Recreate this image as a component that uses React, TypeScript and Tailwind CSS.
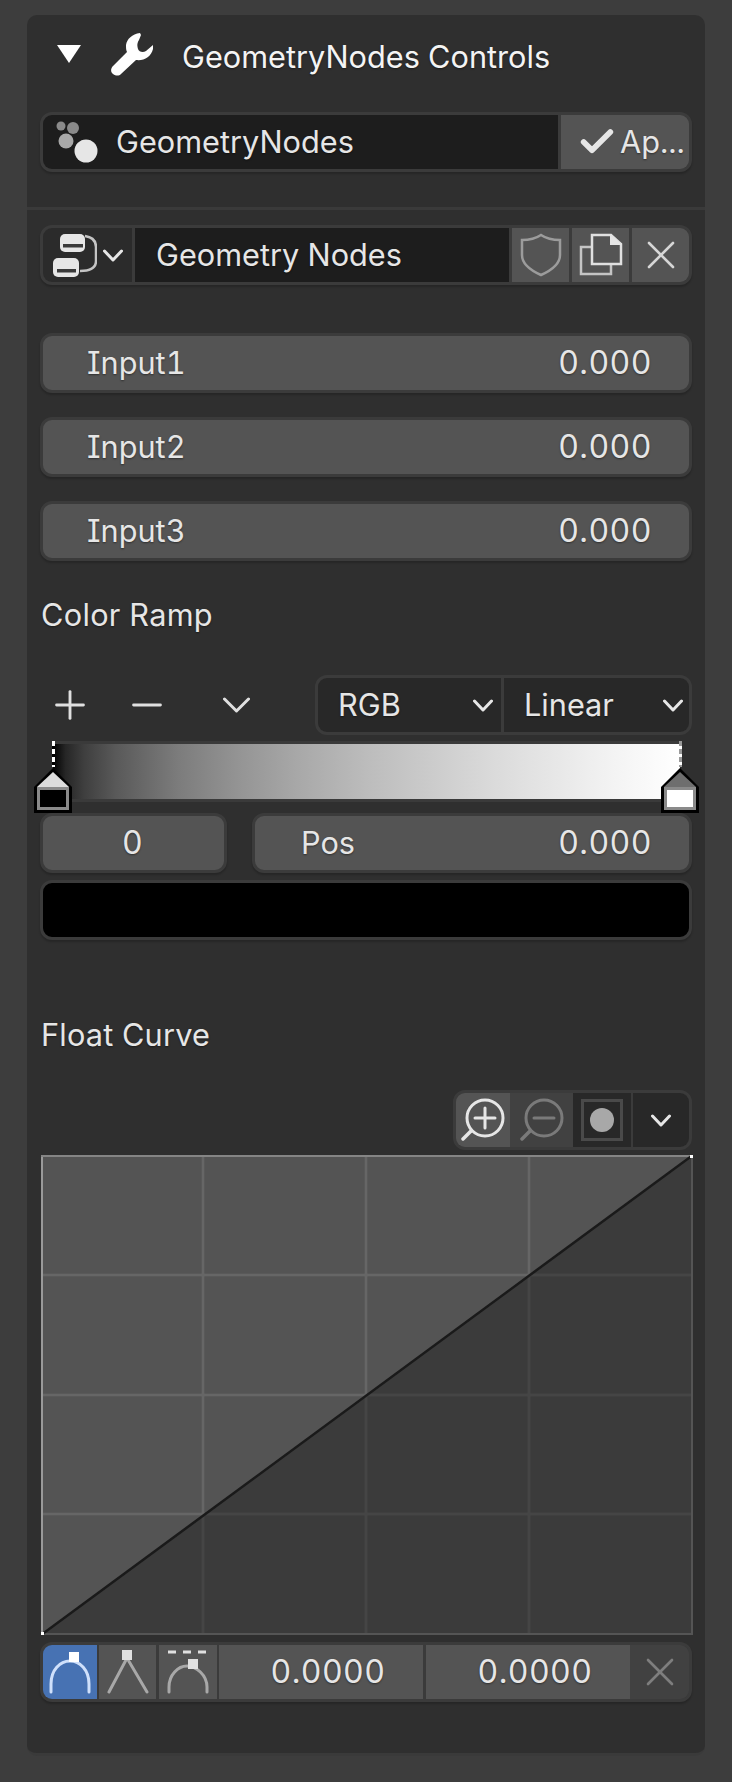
import { Plus, Minus, X, Check } from "lucide-react";

const FONT = "font-['Inter','Noto_Sans',sans-serif] [font-feature-settings:'cv08','tnum'] [text-shadow:0_1px_2px_rgba(0,0,0,0.45)]";

function Chevron({ w, h, color = "#e6e6e6", sw = 3 }: { w: number; h: number; color?: string; sw?: number }) {
  return (
    <svg width={w} height={h} viewBox={`0 0 ${w} ${h}`} fill="none" className="block shrink-0">
      <path d={`M1.5 2 L${w / 2} ${h - 2} L${w - 1.5} 2`} stroke={color} strokeWidth={sw} strokeLinecap="round" strokeLinejoin="round" />
    </svg>
  );
}

function Num({ children }: { children: string }) {
  return <span className="text-[32px] tracking-[0.45px]">{children}</span>;
}

function NumberRow({ label, value }: { label: string; value: string }) {
  return (
    <div className="flex h-[60px] items-center justify-between rounded-[12px] border-[3px] border-[#3b3b3b] bg-[#545454] pl-[44px] pr-[37px] text-[30.7px] text-[#e6e6e6] shadow-[0_2px_2px_rgba(0,0,0,0.2)]">
      <span>{label}</span>
      <Num>{value}</Num>
    </div>
  );
}

function WrenchIcon() {
  return (
    <svg width="43" height="43" viewBox="0 0 43 43">
      <path
        d="M29 0 C21 1 16 6 15 12 C15 15 15 17 16 19 L2 33 C-1 36 0 40 2 41 C5 43 8 43 10 41 L25 27 C33 28 40 24 42 16 L42 12 L35 18 C32 20 28 19 27 16 C26 13 26 10 28 7 L30 2 Z"
        fill="#ffffff"
      />
    </svg>
  );
}

function ModifierIcon() {
  return (
    <svg width="46" height="46" viewBox="0 0 46 46">
      <circle cx="7" cy="7" r="4.5" fill="#8a8a8a" />
      <circle cx="19" cy="9" r="6" fill="#8a8a8a" />
      <circle cx="12" cy="22" r="7.5" fill="#a8a8a8" />
      <circle cx="32" cy="32" r="11.5" fill="#e6e6e6" />
    </svg>
  );
}

function NodeTreeIcon() {
  return (
    <svg width="44" height="44" viewBox="0 0 44 44" fill="none">
      <path d="M32 3 C39 4 43 8 43 14 L43 28 C43 34 38 38 27 38" stroke="#c4c4c4" strokeWidth="2.5" />
      <rect x="7" y="1" width="25" height="18" rx="5" fill="#e6e6e6" />
      <rect x="10" y="11" width="20" height="3.5" fill="#3a3a3a" />
      <rect x="0" y="25" width="26" height="19" rx="5" fill="#e6e6e6" />
      <rect x="4" y="36" width="19" height="3.5" fill="#3a3a3a" />
    </svg>
  );
}

function ShieldIcon() {
  return (
    <svg width="42" height="44" viewBox="0 0 42 44" fill="none">
      <path
        d="M21 2 C15 6 9 7 2 7 L2 22 C2 31 12 38 21 42 C30 38 40 31 40 22 L40 7 C33 7 27 6 21 2 Z"
        stroke="#9c9c9c"
        strokeWidth="2.5"
      />
    </svg>
  );
}

function DuplicateIcon() {
  return (
    <svg width="44" height="44" viewBox="0 0 44 44" fill="none">
      <path d="M13 14 L2 14 L2 41 L32 41 L32 32" stroke="#c4c4c4" strokeWidth="2.5" />
      <path d="M13 31 L13 2 L32 2 L42 11 L42 31 Z" stroke="#e0e0e0" strokeWidth="2.5" />
      <path d="M31 1 L43 12 L31 12 Z" fill="#e6e6e6" />
    </svg>
  );
}

function ZoomIcon({ minus, color }: { minus?: boolean; color: string }) {
  return (
    <svg width="44" height="44" viewBox="0 0 44 44" fill="none" stroke={color} strokeLinecap="round">
      <circle cx="24" cy="20" r="18" strokeWidth="3" />
      <path d="M10 33 L2 41" strokeWidth="3.5" />
      <path d="M14 20 L34 20" strokeWidth="3" />
      {!minus && <path d="M24 10 L24 30" strokeWidth="3" />}
    </svg>
  );
}

function CurveIcon({ kind, color }: { kind: "auto" | "vector" | "extend"; color: string }) {
  if (kind === "vector") {
    return (
      <svg width="44" height="44" viewBox="0 0 44 44" fill="none">
        <path d="M3 42 L21 8 L41 42" stroke={color} strokeWidth="3" strokeLinecap="round" />
        <rect x="16" y="0" width="10" height="10" fill="#e0e0e0" />
      </svg>
    );
  }
  if (kind === "extend") {
    return (
      <svg width="44" height="44" viewBox="0 0 44 44" fill="none">
        <path d="M2 2 L10 2 M17 2 L25 2 M32 2 L40 2" stroke="#e0e0e0" strokeWidth="3" />
        <path d="M3 42 L3 37 C3 25 12 16 21 16 C30 16 41 25 41 37 L41 42" stroke={color} strokeWidth="3" strokeLinecap="round" />
        <rect x="22" y="9" width="10" height="10" fill="#e0e0e0" />
      </svg>
    );
  }
  return (
    <svg width="44" height="44" viewBox="0 0 44 44" fill="none">
      <path d="M3 42 L3 34 C3 20 12 11 22 11 C32 11 41 20 41 34 L41 42" stroke={color} strokeWidth="3" strokeLinecap="round" />
      <rect x="21" y="2" width="10" height="10" fill="#ffffff" />
    </svg>
  );
}

function RampHandle({ side, top, box }: { side: "left" | "right"; top: string; box: string }) {
  return (
    <div className={side === "left" ? "absolute left-[-20px] top-[-3px] flex flex-col items-center" : "absolute right-[-20px] top-[-3px] flex flex-col items-center"}>
      <div
        className={
          side === "left"
            ? "h-[26px] w-[3px] bg-[repeating-linear-gradient(to_bottom,#ffffff_0,#ffffff_5px,#000000_5px,#000000_8px)]"
            : "h-[26px] w-[3px] bg-[repeating-linear-gradient(to_bottom,#9a9a9a_0,#9a9a9a_5px,#ffffff_5px,#ffffff_8px)]"
        }
      />
      <svg width="40" height="47" viewBox="0 0 40 47" className="block">
        <path d="M20 1 L39 20 L39 46 L1 46 L1 20 Z" fill="#000000" />
        <path d="M20 5 L36 20 L4 20 Z" fill={top} />
        <rect x="4" y="20" width="32" height="23" fill="#8a8a8a" />
        <rect x="7" y="23" width="26" height="17" fill={box} />
      </svg>
    </div>
  );
}

function CurveGraph() {
  // plot is 652x480, curve runs corner to corner
  return (
    <svg viewBox="0 0 652 480" width="652" height="480" className="block">
      <rect width="652" height="480" fill="#3b3b3b" />
      <path d="M0 480 L652 0 L0 0 Z" fill="#545454" />
      <path d="M162 0 V480 M325 0 V480 M488 0 V480 M0 120 H652 M0 240 H652 M0 359 H652" stroke="#454545" strokeWidth="3" />
      <path d="M162 0 V361 M325 0 V241 M488 0 V121 M0 120 H489 M0 240 H326 M0 359 H164" stroke="#666666" strokeWidth="3" />
      <path d="M1 0 V480" stroke="#9a9a9a" strokeWidth="2" />
      <path d="M0 1 H652" stroke="#858585" strokeWidth="2" />
      <path d="M651 0 V480 M0 479 H652" stroke="#555555" strokeWidth="2" />
      <path d="M0 480 L652 0" stroke="#1a1a1a" strokeWidth="2.5" />
      <rect x="649" y="0" width="3" height="3" fill="#ffffff" />
      <rect x="0" y="477" width="3" height="3" fill="#ffffff" />
    </svg>
  );
}

export default function App() {
  return (
    <div className={`${FONT} min-h-[1782px] w-[732px] bg-[#3d3d3d] pt-[15px] pl-[27px]`}>
      <div className="h-[1741px] w-[678px] rounded-[10px] border-b-[3px] border-[#3a3a3a] bg-[#2f2f2f]">
        {/* panel header */}
        <div className="flex h-[72px] items-center pl-[30px] pt-[6px]">
          <svg width="24" height="20" viewBox="0 0 24 20">
            <path d="M0 1 H24 L12 19 Z" fill="#ffffff" />
          </svg>
          <span className="ml-[30px]"><WrenchIcon /></span>
          <span className="ml-[28px] mt-[7px] text-[30.7px] text-[#f4f4f4]">GeometryNodes Controls</span>
        </div>

        {/* modifier name + apply */}
        <div className="mx-[13px] mt-[25px] flex h-[60px] overflow-hidden rounded-[12px] border-[3px] border-[#3b3b3b] bg-[#3b3b3b] shadow-[0_2px_2px_rgba(0,0,0,0.2)]">
          <div className="flex flex-1 items-center bg-[#1d1d1d] pl-[11px] text-[30.7px] text-[#e6e6e6]">
            <ModifierIcon />
            <span className="ml-[16px]">GeometryNodes</span>
          </div>
          <div className="ml-[3px] flex w-[128px] items-center bg-[#545454] pl-[16px] text-[30.7px] text-[#e6e6e6]">
            <Check size={40} strokeWidth={3.4} color="#e6e6e6" />
            <span className="ml-[3px]">Ap...</span>
          </div>
        </div>

        <div className="mt-[35px] h-[3px] bg-[#3a3a3a]" />

        {/* node group selector */}
        <div className="mx-[13px] mt-[15px] flex h-[60px] overflow-hidden rounded-[12px] border-[3px] border-[#3b3b3b] bg-[#3b3b3b] text-[#e6e6e6] shadow-[0_2px_2px_rgba(0,0,0,0.2)]">
          <div className="flex w-[89px] items-center gap-[6px] bg-[#2b2b2b] pl-[10px]">
            <NodeTreeIcon />
            <Chevron w={20} h={13} />
          </div>
          <div className="ml-[3px] flex flex-1 items-center bg-[#1d1d1d] pl-[21px] text-[30.7px]">Geometry Nodes</div>
          <div className="ml-[3px] flex w-[57px] items-center justify-center bg-[#545454]"><ShieldIcon /></div>
          <div className="ml-[3px] flex w-[57px] items-center justify-center bg-[#545454]"><DuplicateIcon /></div>
          <div className="ml-[3px] flex w-[57px] items-center justify-center bg-[#545454]"><X size={48} strokeWidth={1.3} color="#d6d6d6" /></div>
        </div>

        {/* inputs */}
        <div className="mx-[13px] mt-[48px] flex flex-col gap-[24px]">
          <NumberRow label="Input1" value="0.000" />
          <NumberRow label="Input2" value="0.000" />
          <NumberRow label="Input3" value="0.000" />
        </div>

        {/* color ramp */}
        <div className="ml-[14px] mt-[34px] text-[30.7px] leading-[40px] tracking-[0.3px] text-[#e6e6e6]">Color Ramp</div>
        <div className="mx-[13px] mt-[40px] flex h-[60px] items-center text-[#e0e0e0]">
          <span className="ml-[7px]"><Plus size={46} strokeWidth={1.5} /></span>
          <span className="ml-[31px]"><Minus size={46} strokeWidth={1.5} /></span>
          <span className="ml-[53px]"><Chevron w={27} h={16} color="#e0e0e0" /></span>
          <div className="ml-[65px] flex h-[60px] flex-1 overflow-hidden rounded-[12px] border-[3px] border-[#3b3b3b] bg-[#3b3b3b] text-[30.7px] text-[#e6e6e6]">
            <div className="flex w-[183px] items-center justify-between bg-[#282828] pl-[20px] pr-[8px]">
              <span>RGB</span>
              <Chevron w={20} h={13} />
            </div>
            <div className="ml-[3px] flex flex-1 items-center justify-between bg-[#282828] pl-[20px] pr-[6px]">
              <span>Linear</span>
              <Chevron w={20} h={13} />
            </div>
          </div>
        </div>
        <div className="relative ml-[26px] mr-[25px] mt-[6px] h-[61px] border-y-[3px] border-[#3a3a3a]">
          <div className="h-full bg-[linear-gradient(to_right,#000000_0%,#262626_2%,#3f3f3f_5%,#595959_10%,#7c7c7c_20%,#959595_30%,#aaaaaa_40%,#bcbcbc_50%,#cbcbcb_60%,#dadada_70%,#e7e7e7_80%,#f4f4f4_90%,#ffffff_100%)]" />
          <RampHandle side="left" top="#dcdcdc" box="#000000" />
          <RampHandle side="right" top="#6e6e6e" box="#ffffff" />
        </div>
        <div className="mx-[13px] mt-[11px] flex gap-[25px] text-[30.7px] text-[#e6e6e6]">
          <div className="flex h-[60px] w-[187px] items-center justify-center rounded-[12px] border-[3px] border-[#3b3b3b] bg-[#545454] pr-[2px] shadow-[0_2px_2px_rgba(0,0,0,0.2)]"><Num>0</Num></div>
          <div className="flex h-[60px] flex-1 items-center justify-between rounded-[12px] border-[3px] border-[#3b3b3b] bg-[#545454] pl-[46px] pr-[37px] shadow-[0_2px_2px_rgba(0,0,0,0.2)]">
            <span>Pos</span>
            <Num>0.000</Num>
          </div>
        </div>
        <div className="mx-[13px] mt-[7px] h-[60px] rounded-[12px] border-[3px] border-[#3b3b3b] bg-black shadow-[0_2px_2px_rgba(0,0,0,0.2)]" />

        {/* float curve */}
        <div className="ml-[14px] mt-[75px] text-[30.7px] leading-[40px] tracking-[0.2px] text-[#e6e6e6]">Float Curve</div>
        <div className="mx-[13px] mt-[35px] flex justify-end">
          <div className="flex h-[60px] w-[239px] overflow-hidden rounded-[12px] border-[3px] border-[#3b3b3b] bg-[#3b3b3b]">
            <div className="flex w-[54px] items-center justify-center bg-[#545454]"><ZoomIcon color="#e6e6e6" /></div>
            <div className="flex w-[63px] items-center justify-center bg-[#414141]"><ZoomIcon minus color="#7a7a7a" /></div>
            <div className="flex w-[58px] items-center justify-center bg-[#282828]">
              <span className="flex h-[42px] w-[42px] items-center justify-center border-[3px] border-[#4a4a4a]">
                <span className="h-[24px] w-[24px] rounded-full bg-[#a8a8a8]" />
              </span>
            </div>
            <div className="ml-[2px] flex flex-1 items-center justify-center bg-[#282828]">
              <Chevron w={20} h={13} />
            </div>
          </div>
        </div>
        <div className="ml-[14px] mt-[5px]">
          <CurveGraph />
        </div>
        <div className="mx-[13px] mt-[7px] flex h-[60px] overflow-hidden rounded-[12px] border-[3px] border-[#3b3b3b] bg-[#3b3b3b] text-[30.7px] text-[#e6e6e6] shadow-[0_2px_2px_rgba(0,0,0,0.2)]">
          <div className="flex w-[54px] items-center justify-center bg-[#4772b3]"><CurveIcon kind="auto" color="#cfe0fb" /></div>
          <div className="ml-[2px] flex w-[57px] items-center justify-center bg-[#545454]"><CurveIcon kind="vector" color="#a8a8a8" /></div>
          <div className="ml-[3px] flex w-[58px] items-center justify-center bg-[#545454]"><CurveIcon kind="extend" color="#a8a8a8" /></div>
          <div className="ml-[2px] flex w-[204px] items-center justify-center bg-[#545454] pl-[14px]"><Num>0.0000</Num></div>
          <div className="ml-[3px] flex w-[204px] items-center justify-center bg-[#545454] pl-[14px]"><Num>0.0000</Num></div>
          <div className="flex flex-1 items-center justify-center bg-[#414141]"><X size={48} strokeWidth={1.3} color="#7e7e7e" /></div>
        </div>
      </div>
    </div>
  );
}
